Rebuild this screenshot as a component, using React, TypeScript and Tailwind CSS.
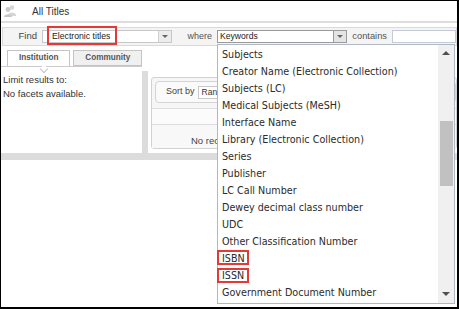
import React from "react";

const fields = [
  "Subjects",
  "Creator Name (Electronic Collection)",
  "Subjects (LC)",
  "Medical Subjects (MeSH)",
  "Interface Name",
  "Library (Electronic Collection)",
  "Series",
  "Publisher",
  "LC Call Number",
  "Dewey decimal class number",
  "UDC",
  "Other Classification Number",
  "ISBN",
  "ISSN",
  "Government Document Number",
];

function PeopleIcon() {
  return (
    <svg width="14" height="14" viewBox="0 0 14 14">
      <circle cx="9" cy="3.5" r="2.3" fill="#d6d6d6" />
      <path d="M5 11 C5 7.5 13 7.5 13 11 L13 12 L5 12 Z" fill="#d6d6d6" />
      <circle cx="5" cy="5.5" r="2.4" fill="#c8c8c8" />
      <path d="M1 13 C1 9.2 9 9.2 9 13 Z" fill="#c8c8c8" />
    </svg>
  );
}

function ArrowBtn({ dark }: { dark?: boolean }) {
  return (
    <div
      className={
        "absolute right-0 top-0 bottom-0 w-[13px] flex items-center justify-center border-l " +
        (dark ? "border-[#9a9a9a] bg-[#e4e4e4]" : "border-[#d0d0d0] bg-[#ececec]")
      }
    >
      <div className="w-0 h-0 border-l-[3px] border-r-[3px] border-t-[3px] border-l-transparent border-r-transparent border-t-[#666]" />
    </div>
  );
}

export default function App() {
  return (
    <div className="relative w-[459px] h-[309px] overflow-hidden bg-white border-l border-t border-r-2 border-b-2 border-black font-['Liberation_Sans',Arial,sans-serif] text-[#333]">
      {/* header */}
      <div className="flex h-[20px] items-center">
        <div className="ml-[2px]">
          <PeopleIcon />
        </div>
        <span className="ml-[15px] text-[10px] text-[#333]">All Titles</span>
      </div>
      <div className="h-[2px] bg-[#dddddd]" />

      {/* search row */}
      <div className="mt-[4px] ml-[1px] h-[19px] border border-[#dadada] bg-[#f4f4f4] flex items-center text-[9px]">
        <span className="w-[34px] text-right text-[#444] text-[9.5px]">Find</span>
        <div className="relative ml-[5px] w-[130px] h-[13px] border border-[#c8c8c8] bg-white flex items-center">
          <span className="pl-[9px] text-[8.7px] text-[#222]">Electronic titles</span>
          <ArrowBtn />
          <div className="absolute left-[4px] top-[-5px] w-[70px] h-[19px] border-2 border-[#e53935]" />
        </div>
        <span className="w-[40px] text-right text-[#555]">where</span>
        <div className="relative ml-[5px] w-[130px] h-[13px] border border-[#9a9a9a] bg-white flex items-center">
          <span className="pl-[2px] text-[8.6px] text-[#222]">Keywords</span>
          <ArrowBtn dark />
        </div>
        <span className="w-[40px] text-right text-[#555] text-[9.3px]">contains</span>
        <div className="ml-[5px] flex-1 h-[13px] border border-[#c4cbd6] bg-white" />
      </div>

      {/* tabs */}
      <div className="flex pt-[4px] h-[21px] w-[141px] border-b border-[#cccccc] text-[8.2px] font-bold text-[#555]">
        <div className="relative ml-[6px] w-[75px] h-[16px] border border-b-0 border-[#c4c4c4] bg-white flex items-center justify-center">
          Institution
          <div className="absolute left-[33px] top-[15px] w-[6px] h-[6px] rotate-45 border-r border-b border-[#c4c4c4] bg-white" />
        </div>
        <div className="ml-[3px] w-[81px] h-[16px] border border-[#c4c4c4] bg-[#f0f0f0] flex items-center justify-center">
          Community
        </div>
      </div>

      {/* content */}
      <div className="flex h-[86px]">
        <div className="w-[141px] pt-[6px] pl-[2px] text-[9.5px] leading-[14px] text-[#333]">
          <div>Limit results to:</div>
          <div>No facets available.</div>
        </div>
        <div className="mt-[4px] w-[6px] bg-[#dcdcdc]" />
        <div className="flex-1 pl-[3px] pt-[10px]">
          <div className="h-[72px] border border-[#d2d2d2] rounded-[3px] bg-[#f6f6f6] flex flex-col">
            <div className="mt-[3px] ml-[3px] h-[23px] border border-[#d4d4d4] rounded-[4px] bg-[#fafafa] flex items-center text-[9px]">
              <span className="pl-[10px] text-[#444]">Sort by</span>
              <div className="ml-[3px] h-[13px] w-[60px] border border-[#c8c8c8] bg-white pl-[3px] text-[8.5px] leading-[11px] text-[#333]">
                Ranking
              </div>
            </div>
            <div className="mt-[5px] h-[17px] border-t border-b border-[#dedede] bg-[#fbfbfb]" />
            <div className="flex-1 bg-[#f8f8f8] pl-[39px] pt-[9px] text-[9.5px] text-[#444]">
              No records found
            </div>
          </div>
        </div>
      </div>
      <div className="h-[7px] bg-[#dcdcdc]" />

      {/* keywords dropdown */}
      <div className="absolute left-[216px] top-[43px] w-[238px] h-[260px] border border-[#b0b8c6] bg-white font-['DejaVu_Sans',Verdana,sans-serif] text-[9.6px] text-[#2b2b2b]">
        <div className="pt-[1px]">
          {fields.map((f) => (
            <div key={f} className="relative h-[17px] leading-[17px] pl-[4px] whitespace-nowrap">
              {f}
              {(f === "ISBN" || f === "ISSN") && (
                <div
                  className={
                    "absolute left-[-1px] w-[32px] h-[15px] border-2 border-[#e53935] " +
                    (f === "ISBN" ? "top-[0px]" : "top-[1px]")
                  }
                />
              )}
            </div>
          ))}
        </div>
        <div className="absolute right-0 top-0 bottom-0 w-[16px] bg-[#f0f0f0]">
          <div className="absolute top-[6px] left-[4px] w-0 h-0 border-l-[4px] border-r-[4px] border-b-[4px] border-l-transparent border-r-transparent border-b-[#505050]" />
          <div className="absolute top-[76px] left-[2px] w-[13px] h-[65px] bg-[#c1c1c1]" />
          <div className="absolute bottom-[7px] left-[4px] w-0 h-0 border-l-[4px] border-r-[4px] border-t-[4px] border-l-transparent border-r-transparent border-t-[#505050]" />
        </div>
      </div>
    </div>
  );
}
